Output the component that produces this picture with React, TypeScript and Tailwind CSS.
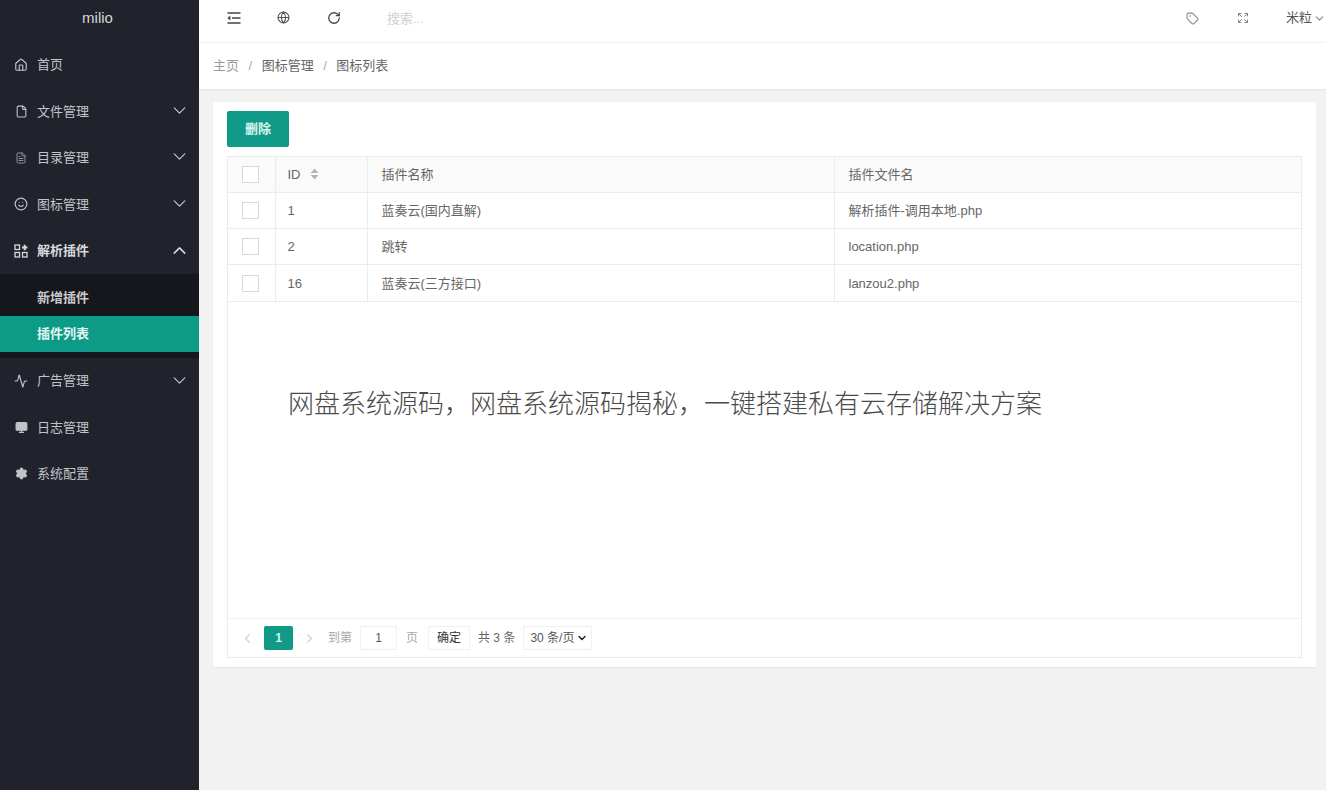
import {
  Activity,
  ChevronDown,
  ChevronLeft,
  ChevronRight,
  ChevronUp,
  Expand,
  File,
  FileText,
  Globe,
  House,
  Monitor,
  RotateCw,
  Settings,
  Smile,
  Tag,
} from "lucide-react";
import React from "react";

const font = "font-['Liberation_Sans','Noto_Sans_CJK_SC',sans-serif]";

function PluginIcon() {
  return (
    <svg viewBox="0 0 14 14" className="h-[14px] w-[14px]" fill="none" stroke="currentColor" strokeWidth="1.3">
      <rect x="1" y="1" width="4.5" height="4.5" />
      <rect x="1" y="8.5" width="4.5" height="4.5" />
      <rect x="8.5" y="8.5" width="4.5" height="4.5" />
      <path d="M10.7 0.8v5.4M8 3.5h5.4" strokeWidth="2" />
    </svg>
  );
}

function ShrinkIcon() {
  return (
    <svg viewBox="0 0 14 12" className="h-[12px] w-[14px]" fill="none" stroke="currentColor" strokeWidth="1.4">
      <path d="M0.5 1h13M5 6h8.5M0.5 11h13" />
      <path d="M3.4 3.6v4.8L0.4 6z" fill="currentColor" stroke="none" />
    </svg>
  );
}

const menuTop = [
  { label: "首页", icon: <House size={14} />, arrow: false },
  { label: "文件管理", icon: <File size={13} />, arrow: true },
  { label: "目录管理", icon: <FileText size={12} className="opacity-70" />, arrow: true },
  { label: "图标管理", icon: <Smile size={14} />, arrow: true },
];

const menuBottom = [
  { label: "广告管理", icon: <Activity size={14} />, arrow: true },
  { label: "日志管理", icon: <Monitor size={13} fill="currentColor" />, arrow: false },
  { label: "系统配置", icon: <Settings size={13} fill="currentColor" />, arrow: false },
];

const rows = [
  { id: 1, name: "蓝奏云(国内直解)", file: "解析插件-调用本地.php" },
  { id: 2, name: "跳转", file: "location.php" },
  { id: 16, name: "蓝奏云(三方接口)", file: "lanzou2.php" },
];

function MenuItem({ label, icon, arrow }: { label: string; icon: React.ReactNode; arrow: boolean }) {
  return (
    <div className="flex h-[46.4px] items-center pl-[14px] pr-[9px] text-[13px] text-[#c2c4c8]">
      <span className="flex w-[14px] justify-center">{icon}</span>
      <span className="ml-[9px] flex-1">{label}</span>
      {arrow && <ChevronDown size={21} strokeWidth={1.4} className="mb-[2px]" />}
    </div>
  );
}

function Checkbox() {
  return <div className="ml-[14px] h-[17px] w-[17px] border border-[#d8d8d8] bg-white" />;
}

export default function App() {
  return (
    <div className={`${font} flex h-[790px] w-[1326px] overflow-hidden bg-[#f2f2f2] text-[13px] text-[#666666]`}>
      <aside className="w-[199px] shrink-0 bg-[#20222c]">
        <div className="flex h-[37px] items-center justify-center pr-[4px] text-[15px] text-[#d5d6d8]">milio</div>
        <div className="pt-[5px]">
          {menuTop.map((m) => (
            <MenuItem key={m.label} {...m} />
          ))}
          <div className="flex h-[46.4px] items-center pl-[14px] pr-[9px] text-[13px] font-bold text-[#d8d9dc]">
            <span className="flex w-[14px] justify-center">
              <PluginIcon />
            </span>
            <span className="ml-[9px] flex-1">解析插件</span>
            <ChevronUp size={21} strokeWidth={1.8} />
          </div>
          <div className="bg-[#15171c]">
            <div className="flex h-[42px] items-center pl-[37px] pt-[5px] font-bold text-[#c9cacd]">新增插件</div>
            <div className="flex h-[36px] items-center bg-[#0d9b88] pl-[37px] font-bold text-[#e4f6f2]">插件列表</div>
            <div className="h-[6px]" />
          </div>
          {menuBottom.map((m) => (
            <MenuItem key={m.label} {...m} />
          ))}
        </div>
      </aside>

      <main className="flex min-w-0 flex-1 flex-col">
        <header className="flex h-[43px] shrink-0 items-center border-b border-[#f0f0f0] bg-white pb-[7px]">
          <div className="ml-[28px] flex w-[50px] text-[#444444]">
            <ShrinkIcon />
          </div>
          <div className="flex w-[50px] text-[#555555]">
            <Globe size={13} />
          </div>
          <div className="flex w-[60px] text-[#444444]">
            <RotateCw size={14} strokeWidth={2.2} />
          </div>
          <span className="pt-[2px] text-[13px] text-[#d0d0d0]">搜索...</span>
          <div className="ml-auto flex items-center pt-[1px] text-[#888888]">
            <Tag size={13} />
            <Expand size={12} className="ml-[38px]" />
            <span className="ml-[37px] whitespace-nowrap text-[13px] text-[#555555]">米粒</span>
            <ChevronDown size={13} className="ml-[1px]" />
          </div>
        </header>

        <nav className="flex h-[46px] shrink-0 items-center bg-white pl-[14px] shadow-[0_1px_2px_rgba(0,0,0,0.06)]">
          <span className="text-[#999999]">主页</span>
          <span className="mx-[9.5px] text-[#aaaaaa]">/</span>
          <span className="text-[#666666]">图标管理</span>
          <span className="mx-[9.5px] text-[#aaaaaa]">/</span>
          <span className="text-[#666666]">图标列表</span>
        </nav>

        <div className="px-[10px] pl-[14px] pt-[13px]">
          <section className="flex h-[565px] flex-col rounded-[2px] bg-white px-[14px] pb-[9px] pt-[9px] shadow-[0_1px_2px_rgba(0,0,0,0.05)]">
            <button className="h-[36px] w-[62px] rounded-[2px] bg-[#109a87] text-[13px] font-bold text-[#d9f5ef]">删除</button>

            <div className="mt-[9px] flex min-h-0 flex-1 flex-col border border-[#ececec]">
              <table className="w-full table-fixed border-collapse">
                <colgroup>
                  <col className="w-[47px]" />
                  <col className="w-[92px]" />
                  <col className="w-[467px]" />
                  <col />
                </colgroup>
                <thead>
                  <tr className="h-[35px] bg-[#fafafa] text-left">
                    <th className="border-r border-[#ececec] font-normal shadow-[1px_0_3px_rgba(0,0,0,0.04)]">
                      <Checkbox />
                    </th>
                    <th className="border-r border-[#ececec] pl-[12px] font-normal">
                      <span className="inline-flex items-center">
                        ID
                        <svg viewBox="0 0 8 12" className="ml-[9px] h-[12px] w-[9px] fill-[#b5b5b5]">
                          <path d="M4 0.5 8 5H0zM4 11.5 0 7h8z" />
                        </svg>
                      </span>
                    </th>
                    <th className="border-r border-[#ececec] pl-[14px] font-normal">插件名称</th>
                    <th className="pl-[14px] font-normal">插件文件名</th>
                  </tr>
                </thead>
                <tbody>
                  {rows.map((r) => (
                    <tr key={r.id} className="h-[36.4px] border-t border-[#ececec]">
                      <td className="border-r border-[#ececec] shadow-[1px_0_3px_rgba(0,0,0,0.04)]">
                        <Checkbox />
                      </td>
                      <td className="border-r border-[#ececec] pl-[12px] pt-[1px]">{r.id}</td>
                      <td className="border-r border-[#ececec] pl-[14px] pt-[1px]">{r.name}</td>
                      <td className="pl-[14px] pt-[1px]">{r.file}</td>
                    </tr>
                  ))}
                </tbody>
              </table>

              <div className="min-h-0 flex-1 border-t border-[#ececec] pl-[60px] pt-[85px] text-[26px] font-light leading-[34px] text-[#4a4a4a]">
                网盘系统源码，网盘系统源码揭秘，一键搭建私有云存储解决方案
              </div>

              <div className="flex h-[39px] shrink-0 items-center border-t border-[#f0f0f0] pl-[12px] text-[12px]">
                <ChevronLeft size={15} className="text-[#d2d2d2]" />
                <span className="ml-[9px] flex h-[24px] w-[29px] items-center justify-center rounded-[2px] bg-[#109a87] font-bold text-[#d9f5ef]">1</span>
                <ChevronRight size={15} className="ml-[9px] text-[#d2d2d2]" />
                <span className="ml-[11px] text-[#a8a8a8]">到第</span>
                <span className="ml-[8px] flex h-[24px] w-[37px] items-center justify-center border border-[#f0f0f0] text-[#555555]">1</span>
                <span className="ml-[9px] text-[#a8a8a8]">页</span>
                <span className="ml-[10px] flex h-[24px] w-[42px] items-center justify-center border border-[#f0f0f0] text-[#333333]">确定</span>
                <span className="ml-[8px] text-[#666666]">共 3 条</span>
                <span className="ml-[8px] flex h-[24px] w-[69px] items-center justify-between border border-[#f0f0f0] pl-[6px] pr-[3px] text-[#555555]">
                  30 条/页
                  <ChevronDown size={12} strokeWidth={3} className="text-[#222222]" />
                </span>
              </div>
            </div>
          </section>
        </div>
      </main>
    </div>
  );
}
